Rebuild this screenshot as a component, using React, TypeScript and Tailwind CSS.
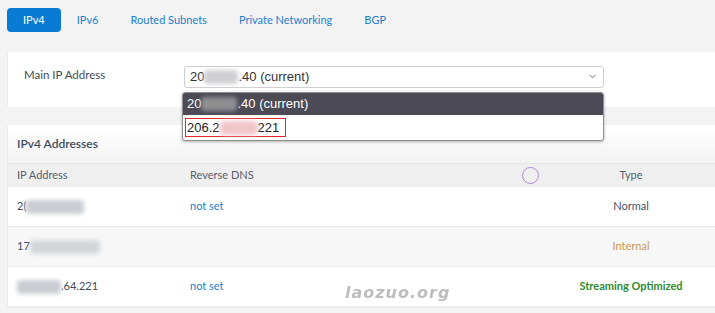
import { ChevronDown } from 'lucide-react';

const tabs = ['IPv4', 'IPv6', 'Routed Subnets', 'Private Networking', 'BGP'];

function Blur(props: { w: string; tint?: string }) {
	return <span className={`inline-block h-[14px] rounded-sm blur-[2px] align-middle ${props.w} ${props.tint ?? 'bg-[#c9cdd2]'}`} />;
}

type Row = {
	ip: React.ReactNode;
	rdns?: string;
	type: string;
	color: string;
	bg: string;
};

const rows: Row[] = [
	{
		ip: (
			<>
				<span>2(</span>
				<Blur w="w-[58px]" />
			</>
		),
		rdns: 'not set',
		type: 'Normal',
		color: 'text-[#3f5368]',
		bg: 'bg-white',
	},
	{
		ip: (
			<>
				<span>17</span>
				<Blur w="w-[70px]" tint="bg-[#d3d6d9]" />
			</>
		),
		type: 'Internal',
		color: 'text-[#c8994a]',
		bg: 'bg-[#f7f7f7]',
	},
	{
		ip: (
			<>
				<Blur w="w-[44px]" />
				<span>.64.221</span>
			</>
		),
		rdns: 'not set',
		type: 'Streaming Optimized',
		color: 'text-[#2f8a2f] font-bold',
		bg: 'bg-white',
	},
];

export default function App() {
	return (
		<div className="relative w-[715px] h-[313px] overflow-hidden bg-[#f3f3f3] pl-[7px] pt-[8px] text-[11px] text-[#3d4b5a] font-['Lato',sans-serif]">
			<div className="flex items-center text-[11px]">
				{tabs.map((t, i) => (
					<div
						key={t}
						className={
							i === 0
								? 'h-[24px] px-4 flex items-center rounded-sm bg-[#0a7bd2] text-white'
								: 'h-[24px] px-4 flex items-center text-[#1b7fcf]'
						}
					>
						{t}
					</div>
				))}
			</div>

			<div className="mt-[20px] h-[55px] bg-white flex items-center pl-4 border-l border-[#ebebeb]">
				<div className="w-[160px] -mt-[9px] text-[11.5px] text-[#3d4b5a]">Main IP Address</div>
				<div className="relative -mt-[6px]">
					<div className="w-[420px] h-[22px] rounded-[3px] border border-[#cfcfcf] flex items-center justify-between px-[5px] font-['Liberation_Sans',sans-serif] text-[13px] text-[#333]">
						<span className="flex items-center">
							20
							<Blur w="w-[34px]" tint="bg-[#cfcfd3]" />
							.40 (current)
						</span>
						<ChevronDown size={11} className="text-[#666]" />
					</div>
				</div>
			</div>

			<div className="mt-[18px] bg-white border-l border-[#ebebeb]">
				<div className="h-[38px] flex items-center pl-[9px] font-semibold text-[#3a4c5e] bg-gradient-to-b from-white to-[#f3f3f3] text-[12px]">
					IPv4 Addresses
				</div>
				<div className="relative h-[23px] flex items-center bg-[#efefef] border-t border-[#e4e4e4] text-[#56606b]">
					<div className="w-[182px] pl-[9px]">IP Address</div>
					<div className="flex-1">Reverse DNS</div>
					<div className="w-[170px] text-center pl-[2px]">Type</div>
					<span className="absolute left-[514px] top-[3px] w-[17px] h-[17px] rounded-full border border-[#b08ad8]" />
				</div>
				{rows.map((r) => (
					<div key={r.type} className={`h-[40px] flex items-center border-t border-[#ebebeb] ${r.bg}`}>
						<div className="w-[182px] pl-[9px] flex items-center text-[#3d4b5a]">{r.ip}</div>
						<div className="flex-1 text-[#237fc8]">{r.rdns}</div>
						<div className={`w-[170px] text-center pl-[2px] ${r.color}`}>{r.type}</div>
					</div>
				))}
				<div className="h-[2px] bg-[#ececec]" />
			</div>

			<div className="absolute left-[182px] top-[92px] w-[422px] rounded-[3px] border border-[#8f8f8f] bg-white shadow-[0_1px_3px_rgba(0,0,0,0.3)] font-['Liberation_Sans',sans-serif] text-[13px] overflow-hidden">
				<div className="h-[22px] flex items-center px-[4px] bg-[#4b4a55] text-white">
					20
					<Blur w="w-[36px]" tint="bg-[#8e8e93]" />
					.40 (current)
				</div>
				<div className="h-[25px] flex items-center px-[2px]">
					<div className="w-[101px] h-[19px] border-[1.5px] border-[#e3262c] flex items-center pl-[1px] text-[#222]">
						206.2
						<Blur w="w-[38px]" tint="bg-[#f1c6cc]" />
						221
					</div>
				</div>
			</div>

			<div className="absolute left-[345px] top-[281px] text-[16px] font-black italic tracking-[1px] text-[#bdbdbd] font-['DejaVu_Sans',sans-serif] blur-[0.3px]">
				laozuo.org
			</div>
		</div>
	);
}
